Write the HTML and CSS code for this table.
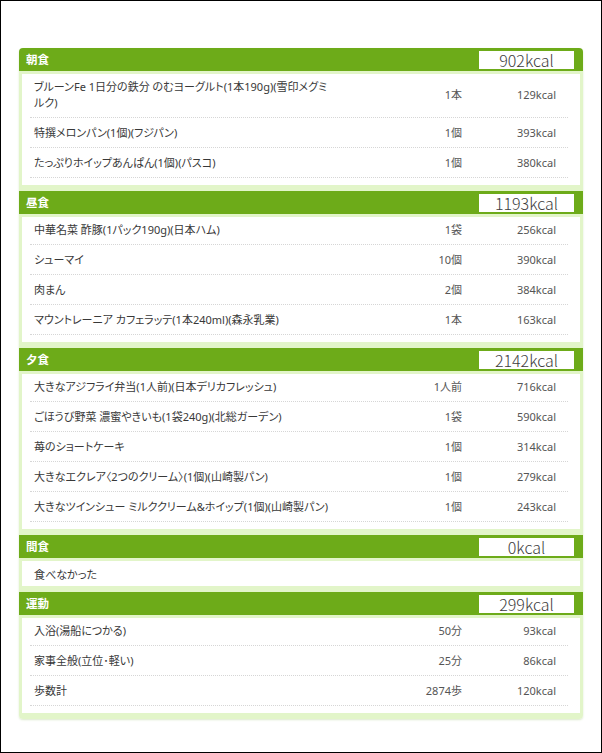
FILE: index.html
```html
<!DOCTYPE html>
<html lang="ja">
<head>
<meta charset="utf-8">
<title>食事記録</title>
<link rel="stylesheet" href="styles.css">
</head>
<body>
<div class="frame">
  <div class="log">
    <section class="meal">
      <header class="meal-head"><h2>朝食</h2><span class="total">902kcal</span></header>
      <div class="meal-body">
        <ul class="items">
          <li class="item"><span class="name">ブルーンFe 1日分の鉄分 のむヨーグルト(1本190g)(雪印メグミ<br>ルク)</span><span class="qty">1本</span><span class="kcal">129kcal</span></li>
          <li class="item"><span class="name">特撰メロンパン(1個)(フジパン)</span><span class="qty">1個</span><span class="kcal">393kcal</span></li>
          <li class="item"><span class="name">たっぷりホイップあんぱん(1個)(パスコ)</span><span class="qty">1個</span><span class="kcal">380kcal</span></li>
        </ul>
      </div>
    </section>
    <section class="meal">
      <header class="meal-head"><h2>昼食</h2><span class="total">1193kcal</span></header>
      <div class="meal-body">
        <ul class="items">
          <li class="item"><span class="name">中華名菜 酢豚(1パック190g)(日本ハム)</span><span class="qty">1袋</span><span class="kcal">256kcal</span></li>
          <li class="item"><span class="name">シューマイ</span><span class="qty">10個</span><span class="kcal">390kcal</span></li>
          <li class="item"><span class="name">肉まん</span><span class="qty">2個</span><span class="kcal">384kcal</span></li>
          <li class="item"><span class="name">マウントレーニア カフェラッテ(1本240ml)(森永乳業)</span><span class="qty">1本</span><span class="kcal">163kcal</span></li>
        </ul>
      </div>
    </section>
    <section class="meal">
      <header class="meal-head"><h2>夕食</h2><span class="total">2142kcal</span></header>
      <div class="meal-body">
        <ul class="items">
          <li class="item"><span class="name">大きなアジフライ弁当(1人前)(日本デリカフレッシュ)</span><span class="qty">1人前</span><span class="kcal">716kcal</span></li>
          <li class="item"><span class="name">ごほうび野菜 濃蜜やきいも(1袋240g)(北総ガーデン)</span><span class="qty">1袋</span><span class="kcal">590kcal</span></li>
          <li class="item"><span class="name">苺のショートケーキ</span><span class="qty">1個</span><span class="kcal">314kcal</span></li>
          <li class="item"><span class="name">大きなエクレア〈2つのクリーム〉(1個)(山崎製パン)</span><span class="qty">1個</span><span class="kcal">279kcal</span></li>
          <li class="item"><span class="name">大きなツインシュー ミルククリーム&amp;ホイップ(1個)(山崎製パン)</span><span class="qty">1個</span><span class="kcal">243kcal</span></li>
        </ul>
      </div>
    </section>
    <section class="meal">
      <header class="meal-head"><h2>間食</h2><span class="total">0kcal</span></header>
      <div class="meal-body">
        <p class="none">食べなかった</p>
      </div>
    </section>
    <section class="meal">
      <header class="meal-head"><h2>運動</h2><span class="total">299kcal</span></header>
      <div class="meal-body">
        <ul class="items">
          <li class="item"><span class="name">入浴(湯船につかる)</span><span class="qty">50分</span><span class="kcal">93kcal</span></li>
          <li class="item"><span class="name">家事全般(立位･軽い)</span><span class="qty">25分</span><span class="kcal">86kcal</span></li>
          <li class="item"><span class="name">歩数計</span><span class="qty">2874歩</span><span class="kcal">120kcal</span></li>
        </ul>
      </div>
    </section>
  </div>
</div>
</body>
</html>
```
FILE: styles.css
```css
* { box-sizing: border-box; }
html, body { margin: 0; padding: 0; background: #fff; }
body {
  font-family: "Noto Sans", "Noto Sans CJK JP", sans-serif;
  font-size: 11px;
  font-feature-settings: "palt";
  color: #383838;
}
.frame {
  width: 602px;
  height: 753px;
  border: 1px solid #000;
  padding: 47px 0 0 18px;
}
.log {
  width: 564px;
  border-radius: 4px;
  overflow: hidden;
  box-shadow: 0 1px 2px rgba(120, 170, 60, 0.25);
}
.meal-head {
  height: 23px;
  background: #6dab19;
  display: flex;
  align-items: center;
  justify-content: space-between;
  padding: 0 9px 0 7px;
}
.meal-head h2 {
  margin: 0;
  font-size: 11.5px;
  font-weight: bold;
  color: #fff;
  line-height: 16px;
}
.total {
  width: 95px;
  height: 18px;
  background: #fff;
  color: #3c3c3c;
  font-family: "Noto Sans CJK JP", sans-serif;
  font-size: 16px;
  font-weight: 300;
  line-height: 18px;
  text-align: center;
  margin-top: 1px;
}
.meal-body {
  background: #e2f5c9;
  padding: 3px 3px 6px;
}
.items {
  list-style: none;
  margin: 0;
  background: #fff;
  padding: 0 12px 7px 8px;
}
.item {
  display: grid;
  grid-template-columns: 340px 1fr 94px;
  align-items: center;
  padding: 7px 12px 6px 4px;
  line-height: 16px;
  border-bottom: 1px dotted #d6d6d6;
}
.item:first-child { padding-top: 5px; }
.qty, .kcal {
  text-align: right;
  color: #555;
}
.none {
  margin: 0;
  background: #fff;
  padding: 6px 12px 3px 12px;
  line-height: 16px;
}
```
